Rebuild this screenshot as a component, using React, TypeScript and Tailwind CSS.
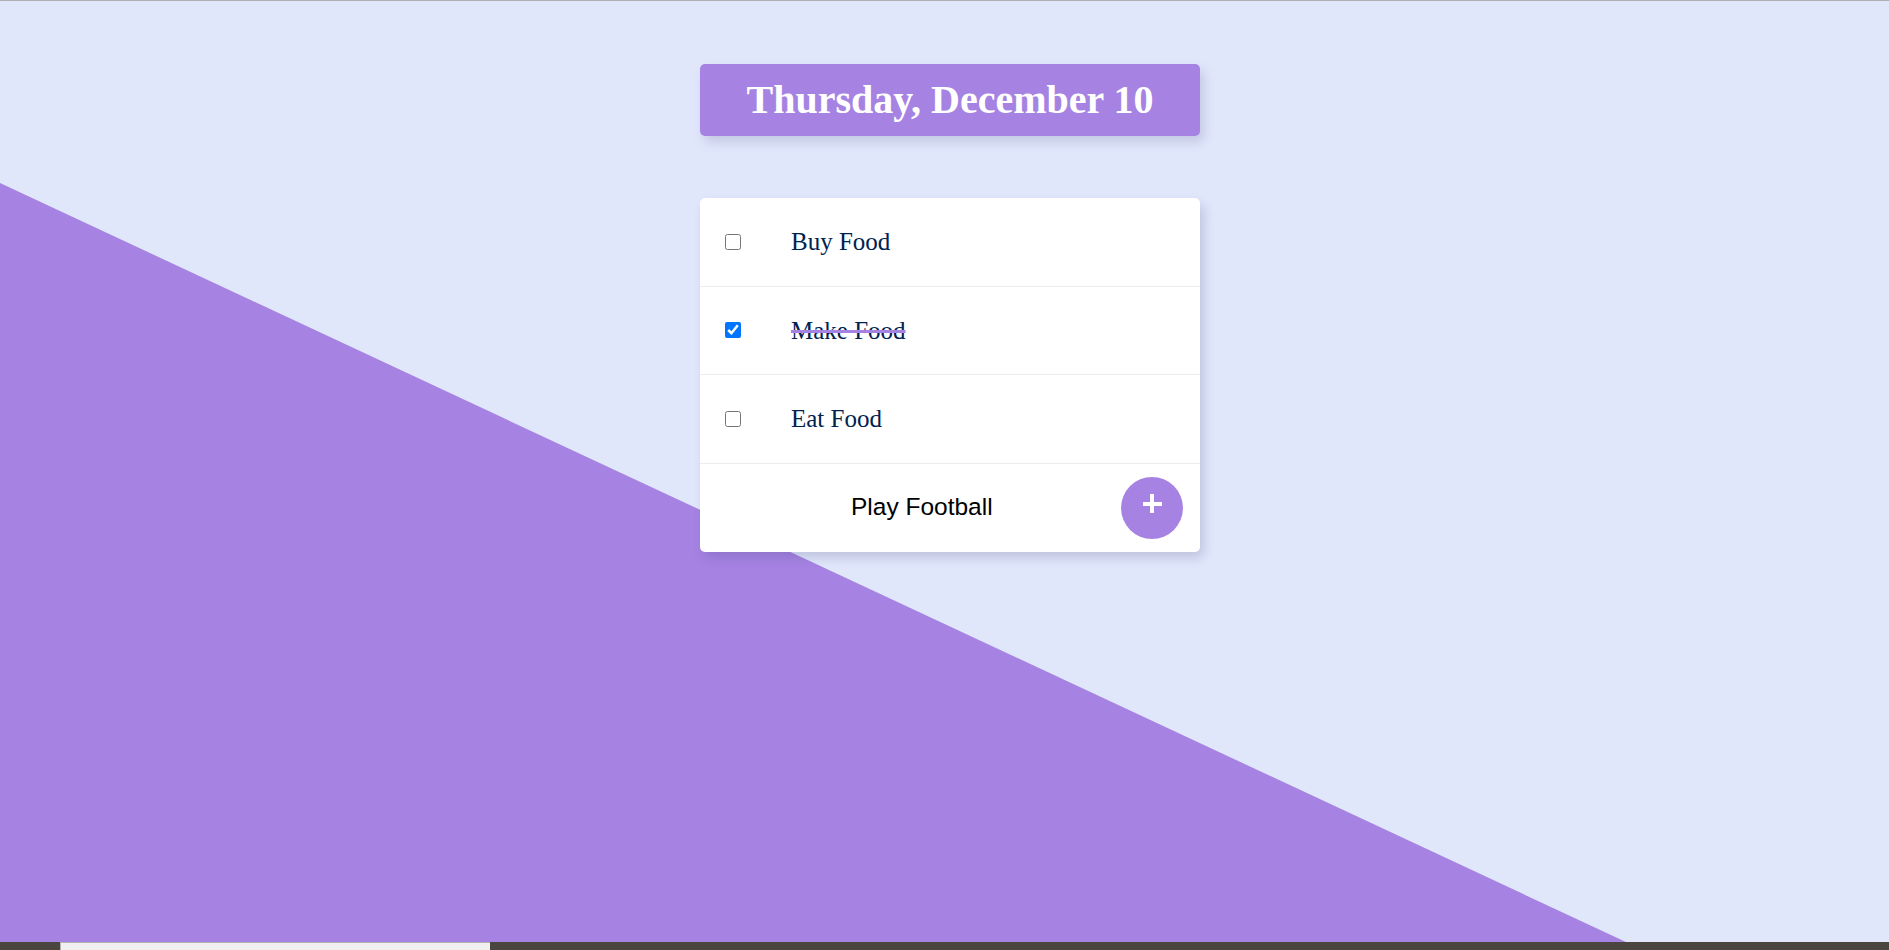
import React from 'react';

const items = [
    { text: 'Buy Food', done: false },
    { text: 'Make Food', done: true },
    { text: 'Eat Food', done: false },
];

const App: React.FC = () => {
    return (
        <div className="w-full h-[950px] flex flex-col overflow-hidden">
            <div className="relative flex-1 bg-[#e1e7fb] border-t border-[#b0b0b0]">
                {/* diagonal backdrop */}
                <div className="absolute inset-0 bg-[#a683e3] [clip-path:polygon(0_182px,1626px_941px,0_941px)]" />

                <div className="relative ml-[700px] w-[500px] pt-[63px] flex flex-col gap-[62px]">
                    <div className="h-[72px] rounded-[5px] bg-[#a683e3] flex items-center justify-center shadow-[4px_6px_12px_rgba(60,60,120,0.18)]">
                        <h1 className="text-white font-bold text-[40px] leading-none font-['Liberation_Serif',serif]">
                            Thursday, December 10
                        </h1>
                    </div>

                    <div className="bg-white rounded-[5px] shadow-[4px_6px_12px_rgba(60,60,120,0.2)] flex flex-col">
                        {items.map((item) => (
                            <div key={item.text} className="h-[88.5px] flex items-center pl-[25px] border-b border-[#ededed]">
                                <input
                                    type="checkbox"
                                    defaultChecked={item.done}
                                    className="w-4 h-4 m-0"
                                />
                                <span
                                    className={`ml-[50px] text-[25px] text-[#00224f] font-['Liberation_Serif',serif] ${
                                        item.done ? 'line-through decoration-[#a683e3] decoration-[3px]' : ''
                                    }`}
                                >
                                    {item.text}
                                </span>
                            </div>
                        ))}
                        <div className="h-[88.5px] flex items-center pr-[17px]">
                            <span className="ml-[151px] flex-1 text-[24.5px] text-black font-['Liberation_Sans',sans-serif]">
                                Play Football
                            </span>
                            <button className="w-[62px] h-[62px] rounded-full bg-[#a683e3] flex items-center justify-center">
                                <span className="relative w-[19px] h-[19px] -translate-y-1">
                                    <span className="absolute left-0 top-[7.5px] w-[19px] h-[4px] bg-white" />
                                    <span className="absolute top-0 left-[7.5px] w-[4px] h-[19px] bg-white" />
                                </span>
                            </button>
                        </div>
                    </div>
                </div>
            </div>

            {/* bottom strip */}
            <div className="h-[8px] bg-[#4a463f] flex">
                <div className="ml-[60px] w-[430px] bg-[#f0f0f0] border-t border-l border-[#b4b4b4]" />
            </div>
        </div>
    );
};

export default App;
